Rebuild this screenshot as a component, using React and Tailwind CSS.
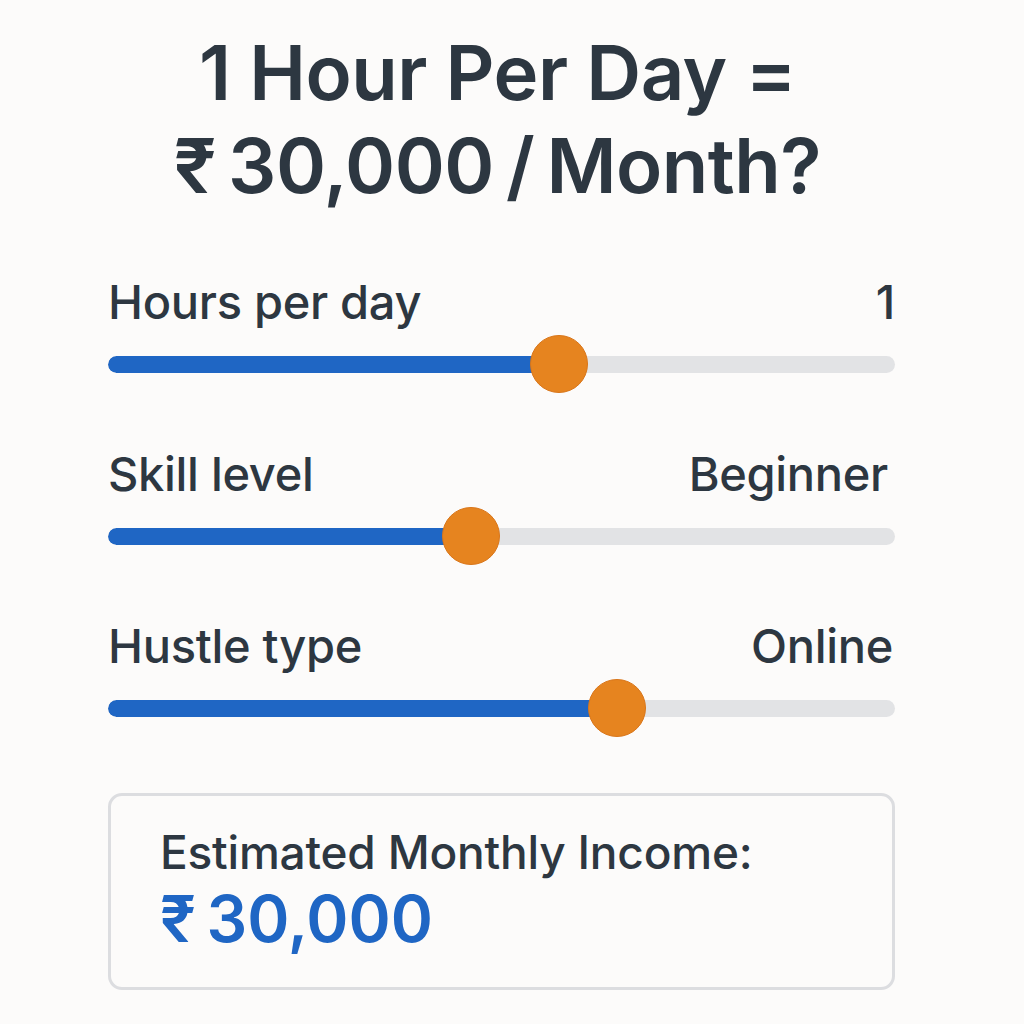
import React from 'react';

const sliders = [
  { label: 'Hours per day', value: '1', pct: 57.3, pad: 'pr-0' },
  { label: 'Skill level', value: 'Beginner', pct: 46.1, pad: 'pr-[7px]' },
  { label: 'Hustle type', value: 'Online', pct: 64.7, pad: 'pr-[2px]' },
];

function Slider({ pct }) {
  return (
    <div className="relative h-[58px] flex items-center">
      <div className="w-full h-[17px] rounded-full bg-[#e2e3e5] overflow-hidden">
        <div className="h-full bg-[#1f66c4] rounded-full" style={{ width: `${pct}%` }} />
      </div>
      <div
        className="absolute top-0 w-[58px] h-[58px] -ml-[29px] rounded-full bg-[#e6841f] border border-[#d9761a]"
        style={{ left: `${pct}%` }}
      />
    </div>
  );
}

export default function App() {
  return (
    <div className="min-h-screen bg-[#fcfbfa] text-[#2d3741]" style={{ fontFamily: 'Inter, "Noto Sans", sans-serif' }}>
      <div className="w-[787px] ml-[108px] pt-[26px]">
        <h1 className="text-center font-semibold text-[76px] leading-[93px] tracking-[-0.5px] -ml-[8px]">
          1 Hour Per Day =<br />₹{'\u2009'}30,000{'\u2009'}/{'\u2009'}Month?
        </h1>

        <div className="mt-[68px] flex flex-col gap-[59px]">
          {sliders.map((s) => (
            <div key={s.label} className="flex flex-col gap-[11px]">
              <div className="flex justify-between text-[47px] leading-[44px] font-medium tracking-[-0.3px]">
                <span>{s.label}</span>
                <span className={s.pad}>{s.value}</span>
              </div>
              <Slider pct={s.pct} />
            </div>
          ))}
        </div>

        <div className="mt-[56px] h-[197px] border-[3px] border-[#dcdde0] rounded-[14px] px-[49px] pt-[34px]">
          <div className="text-[46px] leading-[44px] font-medium tracking-[-0.2px]">Estimated Monthly Income:</div>
          <div className="mt-[14px] text-[64px] leading-[62px] font-semibold text-[#1f66c4]">₹{'\u2009'}30,000</div>
        </div>
      </div>
    </div>
  );
}
